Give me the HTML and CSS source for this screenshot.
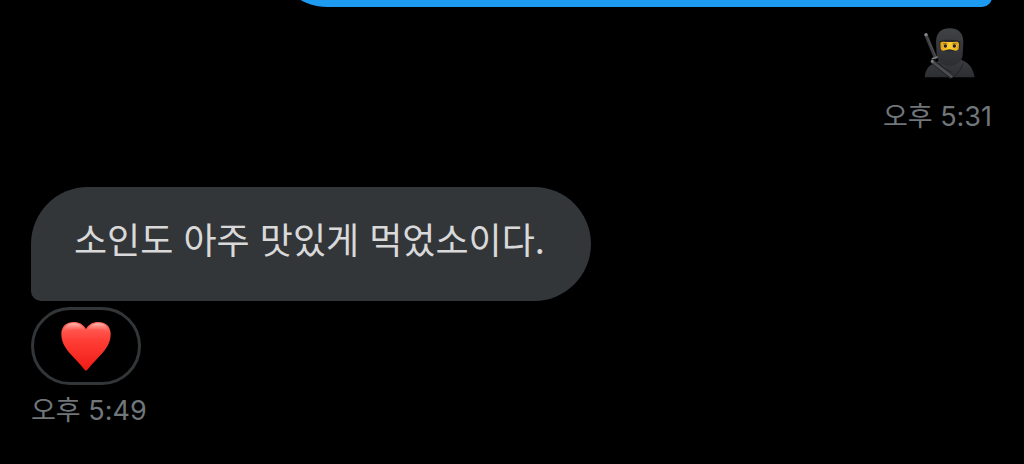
FILE: index.html
```html
<!DOCTYPE html>
<html lang="ko">
<head>
  <meta charset="UTF-8" />
  <meta name="viewport" content="width=device-width, initial-scale=1.0"/>
  <title>쪽지</title>
  <link rel="stylesheet" href="styles.css">
</head>
<body>
  <main class="chat">
    <section class="message sent">
      <div class="bubble bubble-sent"></div>
      <svg class="ninja" viewBox="0 0 162 156" role="img" aria-label="닌자">
        <defs>
          <linearGradient id="hood" x1="0" y1="0" x2="0" y2="1">
            <stop offset="0" stop-color="#404246"/>
            <stop offset="1" stop-color="#2b2d31"/>
          </linearGradient>
          <linearGradient id="robe" x1="0" y1="0" x2="0" y2="1">
            <stop offset="0" stop-color="#393b3f"/>
            <stop offset="1" stop-color="#2c2e32"/>
          </linearGradient>
          <linearGradient id="skin" x1="0" y1="0" x2="1" y2="0">
            <stop offset="0" stop-color="#e0a010"/>
            <stop offset=".5" stop-color="#ffd02e"/>
            <stop offset="1" stop-color="#e3a512"/>
          </linearGradient>
        </defs>
        <!-- 칼 -->
        <path d="M9 24L37 92" stroke="#3b3d40" stroke-width="10" stroke-linecap="round"/>
        <path d="M12 28L39 88" stroke="#56585c" stroke-width="2"/>
        <circle cx="9" cy="23" r="5" fill="#85878b"/>
        <!-- 몸 -->
        <path d="M5 151C7 132 14 118 29 112L52 98H114C134 106 149 117 155 151Z" fill="url(#robe)"/>
        <path d="M121 110Q113 132 92 151" fill="none" stroke="#1f2124" stroke-width="3"/>
        <path d="M47 107Q61 126 85 135" fill="none" stroke="#222428" stroke-width="3"/>
        <!-- 두건 -->
        <path d="M39 45C39 17 56 4 80 4S121 17 121 45L119 84C117 104 101 117 80 117S43 104 41 84Z" fill="url(#hood)"/>
        <path d="M49 43C62 37 97 37 111 43Q113 60 107 70Q80 77 54 70Q48 60 49 43Z" fill="#27292c"/>
        <path d="M52 48Q53 44 60 44Q80 46 102 44Q108 45 108 51L107 66Q105 71 98 71L87 68Q80 66 72 68L61 71Q54 71 53 65Z" fill="url(#skin)"/>
        <path d="M60 51Q66 47 73 51M88 51Q95 47 101 51" fill="none" stroke="#754a08" stroke-width="2"/>
        <ellipse cx="67" cy="57" rx="7" ry="5" fill="#d9c397"/>
        <ellipse cx="94" cy="57" rx="7" ry="5" fill="#d9c397"/>
        <circle cx="67" cy="57" r="5" fill="#251d16"/>
        <circle cx="94" cy="57" r="5" fill="#251d16"/>
        <!-- 칼집 끈 -->
        <path d="M27 102L87 151" stroke="#202225" stroke-width="14"/>
        <path d="M27 103L85 148" stroke="#4b4d52" stroke-width="9" stroke-linecap="round"/>
        <path d="M28 95L42 90" stroke="#808286" stroke-width="5" stroke-linecap="round"/>
        <circle cx="28" cy="103" r="4" fill="#808286"/>
      </svg>
      <time class="time" datetime="17:31">오후 5:31</time>
    </section>

    <section class="message received">
      <p class="bubble bubble-received">소인도 아주 맛있게 먹었소이다.</p>
      <button class="reaction" type="button" aria-label="하트">
        <svg class="heart" viewBox="0 0 150 150" aria-hidden="true">
          <defs>
            <linearGradient id="red" x1="0" y1="0" x2="0" y2="1">
              <stop offset="0" stop-color="#ff6a62"/>
              <stop offset=".35" stop-color="#ff4038"/>
              <stop offset="1" stop-color="#f01a14"/>
            </linearGradient>
            <linearGradient id="shine" x1="0" y1="0" x2="0" y2="1">
              <stop offset="0" stop-color="#ffd0cb" stop-opacity=".8"/>
              <stop offset="1" stop-color="#ff6a62" stop-opacity="0"/>
            </linearGradient>
          </defs>
          <path d="M75 149C72 149 68 142 61 134L34 105C12 82 1 64 1 39C1 16 17 3 38 3C55 3 68 11 75 24C82 11 95 3 112 3C133 3 149 16 149 39C149 64 138 82 116 105L89 134C82 142 78 149 75 149Z" fill="url(#red)"/>
          <path d="M7 34C10 14 22 7 38 7C54 7 65 15 70 27C58 22 25 24 7 34ZM80 27C85 15 96 7 112 7C128 7 140 14 143 34C125 24 92 22 80 27Z" fill="url(#shine)"/>
        </svg>
      </button>
      <time class="time" datetime="17:49">오후 5:49</time>
    </section>
  </main>
</body>
</html>
```
FILE: styles.css
```css
* {
  box-sizing: border-box;
}
body {
  margin: 0;
  background: #000;
  color: #d9d9d9;
  font-family: "Noto Sans CJK KR", sans-serif;
}
.chat {
  padding: 0 32px 32px 31px;
  overflow: hidden;
}
.message {
  display: flex;
  flex-direction: column;
}
.sent {
  align-items: flex-end;
}
.received {
  align-items: flex-start;
  margin-top: 50px;
}
.bubble {
  min-height: 114px;
  margin: 0;
  border-radius: 57px;
}
/* 위로 스크롤되어 아래쪽만 보이는 말풍선 */
.bubble-sent {
  width: 75%;
  margin-top: -107px;
  border-bottom-right-radius: 10px;
  background: #1d9bf0;
}
.bubble-received {
  padding: 23px 46px 35px 43px;
  border-bottom-left-radius: 10px;
  background: #333639;
  font-size: 36px;
  line-height: 56px;
}
.ninja {
  width: 54px;
  height: 52px;
  margin: 20px 15px 18px 0;
}
.reaction {
  display: flex;
  align-items: center;
  justify-content: center;
  width: 110px;
  height: 78px;
  margin-top: 6px;
  padding: 0;
  border: 3px solid #333639;
  border-radius: 39px;
  background: transparent;
  cursor: pointer;
}
.heart {
  width: 50px;
  height: 50px;
}
.time {
  color: #71767b;
  font-family: Inter, "Noto Sans CJK KR", sans-serif;
  font-size: 27px;
  line-height: 40px;
}
.received .time {
  margin-top: 6px;
}
```
